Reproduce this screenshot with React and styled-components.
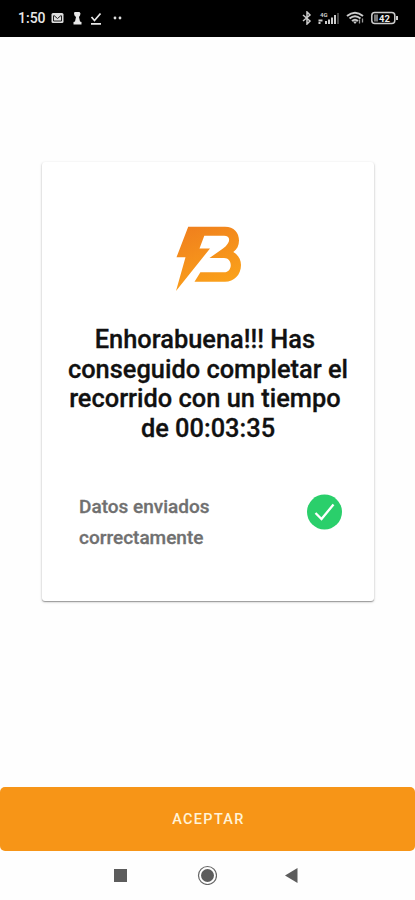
import React from 'react'
import styled, { createGlobalStyle } from 'styled-components'

const GlobalStyle = createGlobalStyle`
  * {
    box-sizing: border-box;
  }
  body {
    margin: 0;
    background: #fefefe;
    font-family: Roboto, 'Liberation Sans', sans-serif;
  }
`

const ScreenStyled = styled.div`
  display: flex;
  flex-direction: column;
  width: 415px;
  height: 900px;
  overflow: hidden;
`

const StatusBarStyled = styled.header`
  display: flex;
  align-items: center;
  justify-content: space-between;
  flex: none;
  height: 37px;
  padding: 0 16px 1px 18px;
  background: #000;
  color: #e8e8e8;
`

const StatusGroupStyled = styled.div`
  display: flex;
  align-items: center;
  gap: ${props => props.$gap}px;
`

const ClockStyled = styled.span`
  width: 27px;
  font-size: 14px;
  font-weight: 500;
  line-height: 16px;
  white-space: nowrap;
`

const MainStyled = styled.main`
  flex: 1;
  padding: 125px 41px 0 42px;
`

const CardStyled = styled.section`
  display: flex;
  flex-direction: column;
  align-items: center;
  height: 439px;
  padding-top: 62px;
  border-radius: 3px;
  background: #fff;
  box-shadow: 0 1px 1px rgba(0, 0, 0, 0.3), 0 1px 3px rgba(0, 0, 0, 0.2);
`

const TitleStyled = styled.h1`
  margin: 33px 0 0;
  color: #111;
  font-size: 25.4px;
  font-weight: 500;
  line-height: 29.6px;
  text-align: center;
  white-space: pre;
  -webkit-text-stroke: 0.3px #111;
`

const TitleLineStyled = styled.span`
  display: block;
`

const ResultStyled = styled.div`
  display: flex;
  justify-content: space-between;
  align-items: flex-start;
  width: 100%;
  margin-top: 48px;
  padding: 0 32px 0 37px;
`

const MessageStyled = styled.p`
  width: 160px;
  margin: 0;
  color: #707070;
  font-size: 19px;
  font-weight: 500;
  line-height: 31px;
  -webkit-text-stroke: 0.3px #707070;
`

const ButtonStyled = styled.button`
  flex: none;
  height: 64px;
  padding: 0 0 0 2px;
  border: 0;
  border-radius: 5px;
  background: #f79517;
  color: #fff3d8;
  font-family: inherit;
  font-size: 14.5px;
  font-weight: 500;
  letter-spacing: 1.3px;
`

const NavBarStyled = styled.nav`
  display: flex;
  flex: none;
  align-items: center;
  justify-content: space-between;
  height: 49px;
  padding: 0 117px 1px 114px;
`

const IconStyled = styled.svg`
  display: block;
  flex: none;
`

const titleLines = [
  'Enhorabuena!!! Has ',
  'conseguido completar el',
  'recorrido con un tiempo ',
  'de 00:03:35'
]

function StatusBar() {
  return (
    <StatusBarStyled>
      <StatusGroupStyled $gap={6}>
        <ClockStyled>1:50</ClockStyled>
        <IconStyled width="13" height="12" viewBox="0 0 13 12">
          <rect x="0.5" y="1" width="12" height="10" rx="1.5" fill="#ddd" />
          <path d="M2.500 3.500v5.500h8V3.500M3 3.500l3.500 3 3.500-3" fill="none" stroke="#222" strokeWidth="1" />
        </IconStyled>
        <IconStyled width="14" height="14" viewBox="0 0 14 14">
          <path d="M4.500 1h5l1 1.500-.5 2L9 6l1 4.500 1.500.5v2.500h-8V11l1.500-.5L6 6 4.500 4.500 4 2.500z" fill="#e8e8e8" />
        </IconStyled>
        <IconStyled width="12" height="13" viewBox="0 0 12 13">
          <path d="M1.500 5l3 3.500L10.500 1.500M1 11.800h10" fill="none" stroke="#e8e8e8" strokeWidth="1.700" />
        </IconStyled>
        <IconStyled width="20" height="12" viewBox="0 0 20 12">
          <circle cx="7" cy="6" r="1.400" fill="#ddd" />
          <circle cx="12" cy="6" r="1.400" fill="#ddd" />
        </IconStyled>
      </StatusGroupStyled>
      <StatusGroupStyled $gap={5}>
        <IconStyled width="10" height="14" viewBox="0 0 10 14">
          <path d="M1 4l7 6L5 13V1l3 3-7 6" fill="none" stroke="#ccc" strokeWidth="1.500" />
        </IconStyled>
        <IconStyled width="24" height="14" viewBox="0 0 24 14">
          <text x="3" y="5.500" fill="#ccc" fontSize="6" fontWeight="700">4G</text>
          <path d="M1.500 9.500h4M1.500 12h2M9 13v-3M12 13V8.500M15 13V6.500M18 13V4" stroke="#ccc" strokeWidth="2" />
          <path d="M21 13V2" stroke="#444" strokeWidth="2" />
        </IconStyled>
        <IconStyled width="20" height="14" viewBox="0 0 20 14">
          <path d="M1 5q8-6.500 16 0M3.500 7.500q5.500-4.500 11 0M6 10q3-2.500 6 0" fill="none" stroke="#ccc" strokeWidth="2" />
          <path d="M7 10.500h4l-2 2.500z" fill="#ccc" />
          <path d="M13.500 12.500V8.500M16.500 7.500v4" stroke="#999" strokeWidth="1.300" />
        </IconStyled>
        <IconStyled width="28" height="14" viewBox="0 0 28 14">
          <rect x="0.800" y="1.500" width="23" height="11" rx="3" fill="none" stroke="#ccc" strokeWidth="1.500" />
          <rect x="3" y="3.500" width="4" height="7" fill="#777" />
          <rect x="25" y="5" width="2" height="4" fill="#ccc" />
          <text x="8" y="10.500" fill="#eee" fontSize="9.500" fontWeight="700">42</text>
        </IconStyled>
      </StatusGroupStyled>
    </StatusBarStyled>
  )
}

function Logo() {
  return (
    <IconStyled width="68" height="68" viewBox="0 0 68 68">
      <defs>
        <linearGradient id="logoFill" x1="0.200" y1="0" x2="0.600" y2="1">
          <stop offset="0" stopColor="#f0801d" />
          <stop offset="1" stopColor="#fba31a" />
        </linearGradient>
      </defs>
      <path
        d="M14.200 2.700H51C60 2.700 65 8.500 65 16.500C65 21.500 63 25.500 59.300 28C64 31 67 35 67 41C67 51 60 57.700 51 57.700H20.500L26.400 48.300H50C59 48.300 59 34 50 34H35.500L49 24.500C57.500 18 56.500 11.700 50 11.700H30.300L25.500 24.500H36L2 67L11.500 33.300H2.500Z"
        fill="url(#logoFill)"
      />
    </IconStyled>
  )
}

function App() {
  return (
    <ScreenStyled>
      <GlobalStyle />
      <StatusBar />
      <MainStyled>
        <CardStyled>
          <Logo />
          <TitleStyled>
            {titleLines.map(line => (
              <TitleLineStyled key={line}>{line}</TitleLineStyled>
            ))}
          </TitleStyled>
          <ResultStyled>
            <MessageStyled>Datos enviados correctamente</MessageStyled>
            <IconStyled width="36" height="40" viewBox="0 0 36 40">
              <circle cx="18.500" cy="21" r="17.500" fill="#2acf6b" />
              <path d="M9.500 22l6 6L27.500 13.500" fill="none" stroke="#fff" strokeWidth="2.300" />
            </IconStyled>
          </ResultStyled>
        </CardStyled>
      </MainStyled>
      <ButtonStyled>ACEPTAR</ButtonStyled>
      <NavBarStyled>
        <IconStyled width="13" height="13" viewBox="0 0 13 13">
          <rect width="13" height="13" fill="#5c5c5c" />
        </IconStyled>
        <IconStyled width="22" height="20" viewBox="0 0 22 20">
          <circle cx="12.500" cy="10.500" r="9" fill="none" stroke="#666" strokeWidth="1.200" />
          <circle cx="12.500" cy="10.500" r="6.500" fill="#5c5c5c" />
        </IconStyled>
        <IconStyled width="13" height="15" viewBox="0 0 13 15">
          <path d="M12.500 0v15L0 7.500z" fill="#5c5c5c" />
        </IconStyled>
      </NavBarStyled>
    </ScreenStyled>
  )
}

export default App
